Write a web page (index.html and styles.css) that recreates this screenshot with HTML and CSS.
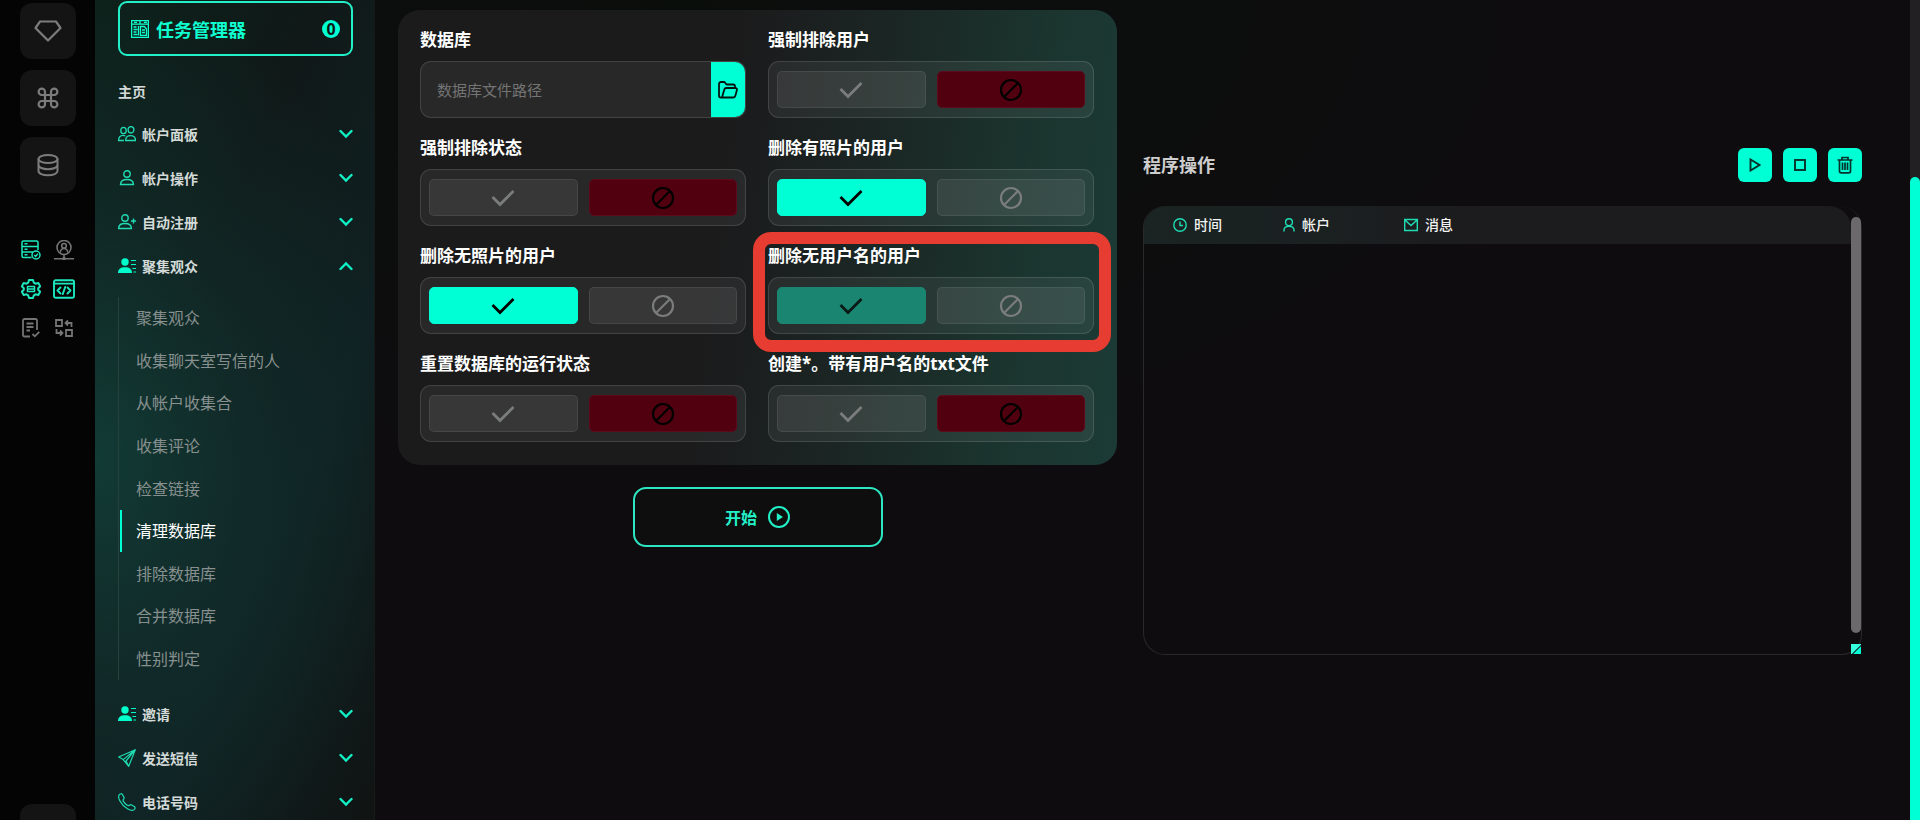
FILE: index.html
```html
<!DOCTYPE html>
<html lang="zh-CN">
<head>
  <meta charset="UTF-8" />
  <meta name="viewport" content="width=device-width, initial-scale=1" />
  <title>清理数据库</title>
  <link rel="stylesheet" href="styles.css">
</head>
<body>

  <!-- shared icons -->
  <svg class="sprite" aria-hidden="true">
    <symbol id="check" viewBox="0 0 24 18"><path d="M1.500 8 9 15.500 22.500 2" fill="none" stroke="currentColor" stroke-width="2.800"/></symbol>
    <symbol id="ban" viewBox="0 0 24 24"><circle cx="12" cy="12" r="10" fill="none" stroke="currentColor" stroke-width="2.200"/><path d="M5 19 19 5" stroke="currentColor" stroke-width="2.200"/></symbol>
    <symbol id="chevron" viewBox="0 0 14 10"><path d="M1.500 2 7 7.500 12.500 2" fill="none" stroke="currentColor" stroke-width="2.400" stroke-linecap="round"/></symbol>
    <symbol id="lines-user" viewBox="0 0 18 16"><circle cx="7" cy="4" r="3.700"/><path d="M0 15c0-4 2.500-5.800 7-5.800S14 11 14 15Z"/><path d="M13 2.500h5M13 6.500h5M14.500 10.500H18M15.500 14H18" stroke="currentColor" stroke-width="1"/></symbol>
  </svg>

  <div class="layout">
    <nav class="rail" aria-label="工具">
      <div class="rail-tiles">
        <a class="tile" href="#" aria-label="高级">
          <svg width="28" height="24" viewBox="0 0 28 24"><path d="M6 2.500h16l4.500 6.500L14 21.500 1.500 9Z" fill="none" stroke="currentColor" stroke-width="2.200" stroke-linejoin="round"/></svg>
        </a>
        <a class="tile" href="#" aria-label="命令">
          <svg width="22" height="22" viewBox="0 0 22 22"><path d="M8 8V4.800A3.200 3.200 0 1 0 4.800 8h12.400A3.200 3.200 0 1 0 14 4.800v12.400a3.200 3.200 0 1 0 3.200-3.200H4.800A3.200 3.200 0 1 0 8 17.200Z" fill="none" stroke="currentColor" stroke-width="2.200"/></svg>
        </a>
        <a class="tile" href="#" aria-label="数据库">
          <svg width="22" height="24" viewBox="0 0 22 24"><g fill="none" stroke="currentColor" stroke-width="2"><ellipse cx="11" cy="6" rx="9.500" ry="4"/><path d="M1.500 6v12c0 2.400 4 4.300 9.500 4.300s9.500-1.900 9.500-4.300V6M1.500 12c0 2.400 4 4.200 9.500 4.200s9.500-1.800 9.500-4.200"/></g></svg>
        </a>
      </div>

      <div class="rail-icons">
        <a class="on" href="#" aria-label="服务器">
          <svg width="20" height="20" viewBox="0 0 20 20"><g fill="none" stroke="currentColor" stroke-width="1.500"><path d="M10.500 17.500h-8A1.500 1.500 0 0 1 1 16V2.500A1.500 1.500 0 0 1 2.500 1h13A1.500 1.500 0 0 1 17 2.500V10M1 6.500h16M1 12h11"/><path d="M3.500 3.800h3M3.500 9.300h3M3.500 14.800h3"/><circle cx="15" cy="15" r="4"/><path d="m13.200 15 1.400 1.400 2.300-2.600"/></g></svg>
        </a>
        <a href="#" aria-label="代理">
          <svg width="20" height="20" viewBox="0 0 20 20"><g fill="none" stroke="currentColor" stroke-width="1.600"><circle cx="10" cy="7.500" r="7"/><circle cx="10" cy="5.800" r="2.300"/><path d="M6.300 12.500c.2-2.800 1.500-4 3.700-4s3.500 1.200 3.700 4M10 14.500v3M0 18.800h20"/><circle cx="10" cy="18.500" r="1"/></g></svg>
        </a>
        <a class="on" href="#" aria-label="设置">
          <svg width="20" height="20" viewBox="0 0 20 20"><g fill="none" stroke="currentColor" stroke-width="2" stroke-linejoin="round"><path d="M8 1h4l.8 2.700 1.700 1 2.800-.7 1.900 3.300-2 2v1.400l2 2-1.900 3.300-2.800-.7-1.700 1L12 19H8l-.8-2.700-1.700-1-2.800.7-1.900-3.300 2-2V9.300l-2-2L2.700 4l2.800.7 1.700-1Z"/><path d="M6.500 7.500h7v5h-7ZM6.500 10h7" stroke-width="1.500"/></g></svg>
        </a>
        <a class="on" href="#" aria-label="代码">
          <svg width="22" height="20" viewBox="0 0 22 20"><g fill="none" stroke="currentColor" stroke-width="1.900" stroke-linecap="round" stroke-linejoin="round"><rect x="1" y="1.200" width="20" height="17.600" rx="1.800"/><path d="M1 4.600h20M7.500 8.500 4.500 11.500l3 3M14.500 8.500l3 3-3 3M12.200 8l-2.400 7"/></g></svg>
        </a>
        <a href="#" aria-label="任务">
          <svg width="18" height="20" viewBox="0 0 18 20"><g fill="none" stroke="currentColor" stroke-width="1.800"><path d="M8 18.500H2.500A1.500 1.500 0 0 1 1 17V2.500A1.500 1.500 0 0 1 2.500 1h11A1.500 1.500 0 0 1 15 2.500V12M4.500 5.500h7M4.500 9h7M4.500 12.500H8M10.500 16l2.300 2.300 4.500-4.500"/></g></svg>
        </a>
        <a href="#" aria-label="转换">
          <svg width="18" height="18" viewBox="0 0 18 18"><g fill="none" stroke="currentColor" stroke-width="1.800"><path d="M1 1h6v6H1ZM11 11h6v6h-6ZM16.500 8V4H11M13 1.500 10.500 4 13 6.500M1.500 10v4H7M5 11.500 7.500 14 5 16.500"/></g></svg>
        </a>
      </div>

      <a class="tile tile-last" href="#" aria-label="更多"></a>
    </nav>

    <aside class="sidebar">
      <a class="manager" href="#">
        <svg width="18" height="18" viewBox="0 0 18 18"><g fill="none" stroke="currentColor" stroke-width="1.300"><path d="M.6.600h16.800v16.800H.6ZM.6 4.200h16.800M9 4.200v-3M3 2.400h3M13 2.400h3"/><path d="M2.500 7h3M2.500 9.500h4M2.500 12h3M2.500 14.500h4M7.500 6v9.500M9.500 6.500h3.800L15.500 9v6.300h-6ZM11 10h3M11 12.500h3"/></g></svg>
        <span>任务管理器</span>
        <span class="badge">0</span>
      </a>

      <nav class="menu" aria-label="主菜单">
        <a class="home" href="#">主页</a>
        <a class="row" href="#">
          <svg class="ico" viewBox="0 0 18 16"><g fill="none" stroke="currentColor" stroke-width="1.300"><ellipse cx="5.500" cy="4.500" rx="2.700" ry="3.200"/><ellipse cx="13" cy="3.800" rx="2.900" ry="3.200"/><path d="M6 14.500H.6C.6 11 2.200 9.300 5 9.300c1 0 1.700.2 2.300.5M7.600 14.500c0-3.500 1.900-4.900 5-4.900s4.900 1.400 4.900 4.900Z"/></g></svg>
          <span>帐户面板</span>
          <svg class="chev"><use href="#chevron"/></svg>
        </a>
        <a class="row" href="#">
          <svg class="ico" viewBox="0 0 18 16"><g fill="none" stroke="currentColor" stroke-width="1.400"><circle cx="9" cy="4" r="3.200"/><path d="M2.500 14.500c0-3.600 2.200-5 6.500-5s6.500 1.400 6.500 5Z"/></g></svg>
          <span>帐户操作</span>
          <svg class="chev"><use href="#chevron"/></svg>
        </a>
        <a class="row" href="#">
          <svg class="ico" viewBox="0 0 18 16"><g fill="none" stroke="currentColor" stroke-width="1.400"><circle cx="7" cy="4" r="3.200"/><path d="M.6 14.500c0-3.600 2.200-5 6.400-5s6.400 1.400 6.400 5ZM15.500 4.500v5M13 7h5"/></g></svg>
          <span>自动注册</span>
          <svg class="chev"><use href="#chevron"/></svg>
        </a>
        <a class="row" href="#" aria-expanded="true">
          <svg class="ico solid"><use href="#lines-user"/></svg>
          <span>聚集观众</span>
          <svg class="chev up"><use href="#chevron"/></svg>
        </a>
        <div class="submenu">
          <a href="#">聚集观众</a>
          <a href="#">收集聊天室写信的人</a>
          <a href="#">从帐户收集合</a>
          <a href="#">收集评论</a>
          <a href="#">检查链接</a>
          <a class="active" href="#" aria-current="page">清理数据库</a>
          <a href="#">排除数据库</a>
          <a href="#">合并数据库</a>
          <a href="#">性别判定</a>
        </div>
        <a class="row" href="#">
          <svg class="ico solid"><use href="#lines-user"/></svg>
          <span>邀请</span>
          <svg class="chev"><use href="#chevron"/></svg>
        </a>
        <a class="row" href="#">
          <svg class="ico tall" viewBox="0 0 18 18"><path d="M17.300.700.7 8l4.500 2.600L10.700 17.300ZM17.300.700 5.200 10.600M17.300.700 8 12l2.700 5.300" fill="none" stroke="currentColor" stroke-width="1.200" stroke-linejoin="round"/></svg>
          <span>发送短信</span>
          <svg class="chev"><use href="#chevron"/></svg>
        </a>
        <a class="row" href="#">
          <svg class="ico tall" viewBox="0 0 18 18"><path d="M1.200 1.800C2.400.400 3.600.400 4.400 1.600l1.500 2.500c.5.900.2 1.600-.5 2.300-.6.600-.6 1 0 2 .9 1.500 2.300 2.900 3.900 3.900 1 .6 1.400.5 2 0 .7-.7 1.400-.9 2.300-.4l2.600 1.600c1.300.8 1.200 2 0 3.100-1.500 1.300-3.700.9-6.700-.9-3.200-1.900-6-4.700-7.700-8C.5 5.200.200 3.100 1.200 1.800Z" fill="none" stroke="currentColor" stroke-width="1.200"/></svg>
          <span>电话号码</span>
          <svg class="chev"><use href="#chevron"/></svg>
        </a>
      </nav>
    </aside>

    <main class="content">
      <section class="left">
        <div class="card">
          <div class="field">
            <label class="title" for="db-path">数据库</label>
            <div class="box file">
              <input id="db-path" type="text" placeholder="数据库文件路径">
              <button class="browse" type="button" aria-label="选择文件">
                <svg width="20" height="18" viewBox="0 0 20 18"><path d="M4 16.500H2.800C1.700 16.500 1 15.800 1 14.700V3c0-1.200.8-2 2-2h3.500L8.500 3.500H15c1.300 0 2 .8 2 2V7M4 16.500 6.300 8.400C6.600 7.400 7.200 7 8.200 7h9.200c1.200 0 1.800.8 1.500 1.900l-1.600 6.200c-.3 1-.9 1.400-1.900 1.400Z" fill="none" stroke="currentColor" stroke-width="1.800" stroke-linejoin="round"/></svg>
              </button>
            </div>
          </div>

          <div class="field">
            <div class="title" id="f1">强制排除用户</div>
            <div class="box toggle" role="group" aria-labelledby="f1">
              <button type="button" aria-label="是"><svg class="check"><use href="#check"/></svg></button>
              <button class="no" type="button" aria-label="否" aria-pressed="true"><svg class="ban"><use href="#ban"/></svg></button>
            </div>
          </div>

          <div class="field">
            <div class="title" id="f2">强制排除状态</div>
            <div class="box toggle" role="group" aria-labelledby="f2">
              <button type="button" aria-label="是"><svg class="check"><use href="#check"/></svg></button>
              <button class="no" type="button" aria-label="否" aria-pressed="true"><svg class="ban"><use href="#ban"/></svg></button>
            </div>
          </div>

          <div class="field">
            <div class="title" id="f3">删除有照片的用户</div>
            <div class="box toggle" role="group" aria-labelledby="f3">
              <button class="yes" type="button" aria-label="是" aria-pressed="true"><svg class="check"><use href="#check"/></svg></button>
              <button type="button" aria-label="否"><svg class="ban"><use href="#ban"/></svg></button>
            </div>
          </div>

          <div class="field">
            <div class="title" id="f4">删除无照片的用户</div>
            <div class="box toggle" role="group" aria-labelledby="f4">
              <button class="yes" type="button" aria-label="是" aria-pressed="true"><svg class="check"><use href="#check"/></svg></button>
              <button type="button" aria-label="否"><svg class="ban"><use href="#ban"/></svg></button>
            </div>
          </div>

          <div class="field marked">
            <div class="title" id="f5">删除无用户名的用户</div>
            <div class="box toggle" role="group" aria-labelledby="f5">
              <button class="yes dim" type="button" aria-label="是" aria-pressed="true"><svg class="check"><use href="#check"/></svg></button>
              <button type="button" aria-label="否"><svg class="ban"><use href="#ban"/></svg></button>
            </div>
          </div>

          <div class="field">
            <div class="title" id="f6">重置数据库的运行状态</div>
            <div class="box toggle" role="group" aria-labelledby="f6">
              <button type="button" aria-label="是"><svg class="check"><use href="#check"/></svg></button>
              <button class="no" type="button" aria-label="否" aria-pressed="true"><svg class="ban"><use href="#ban"/></svg></button>
            </div>
          </div>

          <div class="field">
            <div class="title" id="f7">创建*。带有用户名的txt文件</div>
            <div class="box toggle" role="group" aria-labelledby="f7">
              <button type="button" aria-label="是"><svg class="check"><use href="#check"/></svg></button>
              <button class="no" type="button" aria-label="否" aria-pressed="true"><svg class="ban"><use href="#ban"/></svg></button>
            </div>
          </div>
        </div>

        <button class="start" type="button">
          开始
          <svg width="22" height="22" viewBox="0 0 22 22"><circle cx="11" cy="11" r="10" fill="none" stroke="currentColor" stroke-width="2"/><path d="M8.800 7 15 11l-6.200 4Z" fill="currentColor"/></svg>
        </button>
      </section>

      <section class="right">
        <div class="ops">
          <h2>程序操作</h2>
          <button type="button" aria-label="运行"><svg width="12" height="14" viewBox="0 0 12 14"><path d="M1.500 1.500v11L10.500 7Z" fill="none" stroke="currentColor" stroke-width="1.900"/></svg></button>
          <button type="button" aria-label="停止"><svg width="12" height="12" viewBox="0 0 12 12"><rect x="1" y="1" width="10" height="10" fill="none" stroke="currentColor" stroke-width="1.900"/></svg></button>
          <button type="button" aria-label="清空"><svg width="16" height="18" viewBox="0 0 16 18"><path d="M.5 4h15M5 4V1.500h6V4M2.500 4v11c0 1.200.7 1.800 1.800 1.800h7.400c1.100 0 1.800-.6 1.800-1.800V4M5.500 6.500v7.500M8 6.500v7.500M10.500 6.500v7.500" fill="none" stroke="currentColor" stroke-width="1.700"/></svg></button>
        </div>

        <div class="log">
          <table>
            <thead>
              <tr>
                <th class="time"><svg width="14" height="14" viewBox="0 0 14 14"><g fill="none" stroke="currentColor" stroke-width="1.400"><circle cx="7" cy="7" r="6.200"/><path d="M7 3.500V7.500h3"/></g></svg>时间</th>
                <th class="account"><svg width="12" height="14" viewBox="0 0 12 14"><g fill="none" stroke="currentColor" stroke-width="1.400"><circle cx="6" cy="4.200" r="3.400"/><path d="M1 13.500V12c0-2.600 1.800-3.600 5-3.600s5 1 5 3.600v1.500"/></g></svg>帐户</th>
                <th><svg width="14" height="14" viewBox="0 0 14 14"><path d="M.7 1.500h12.600v11H.7ZM.7 1.800 7 7.500l6.300-5.700" fill="none" stroke="currentColor" stroke-width="1.400"/></svg>消息</th>
              </tr>
            </thead>
          </table>
          <div class="log-scroll"><span class="thumb"></span><span class="grip"></span></div>
        </div>
      </section>
    </main>

    <div class="page-scroll"><span></span></div>
  </div>

</body>
</html>
```
FILE: styles.css
```css
* {
  box-sizing: border-box;
}

body {
  margin: 0;
  height: 100vh;
  overflow: hidden;
  background: #0e0c0f;
  color: #fff;
  font-family: "Noto Sans", "Noto Sans CJK SC", sans-serif;
  font-size: 14px;
}

a {
  color: inherit;
  text-decoration: none;
}

button {
  padding: 0;
  border: none;
  font-family: inherit;
  cursor: pointer;
}

svg {
  display: block;
  flex: none;
}

.sprite {
  display: none;
}

.layout {
  display: flex;
  height: 100vh;
}

/* left rail */
.rail {
  width: 95px;
  flex: none;
  display: flex;
  flex-direction: column;
  padding: 3px 19px 0 20px;
  background: #040405;
  overflow: hidden;
}

.rail-tiles {
  display: grid;
  gap: 11px;
}

.tile {
  width: 56px;
  height: 56px;
  display: flex;
  flex: none;
  align-items: center;
  justify-content: center;
  border-radius: 12px;
  background: #141414;
  color: #7c7c7c;
}

.tile-last {
  margin-top: auto;
  margin-bottom: -40px;
}

.rail-icons {
  display: grid;
  grid-template-columns: 22px 22px;
  grid-auto-rows: 20px;
  gap: 19px 11px;
  margin-top: 47px;
  color: #747474;
}

.rail-icons a {
  display: flex;
  align-items: center;
  justify-content: center;
}

.rail-icons .on {
  color: #1ce8be;
}

/* sidebar */
.sidebar {
  width: 280px;
  flex: none;
  padding: 1px 21px 0 23px;
  background:
    radial-gradient(ellipse 320px 480px at 0 56%, #123b35 0%, rgba(17, 48, 46, 0.6) 50%, rgba(17, 36, 36, 0) 100%),
    linear-gradient(115deg, #0d211a 0%, #101918 35%, #102022 65%, #101413 100%);
  border-right: 1px solid #161b1a;
  overflow: hidden;
}

.manager {
  height: 55px;
  display: flex;
  align-items: center;
  gap: 7px;
  padding: 0 11px;
  border: 2px solid #22f0c9;
  border-radius: 9px;
  color: #0fffd0;
  font-size: 18px;
  font-weight: 700;
}

.badge {
  width: 18px;
  height: 18px;
  margin-left: auto;
  border-radius: 50%;
  background: #00ffd2;
  color: #101413;
  font-size: 16px;
  line-height: 18px;
  text-align: center;
}

.menu {
  display: flex;
  flex-direction: column;
  margin-top: 16px;
  color: #d3dad8;
  font-weight: 700;
}

.home {
  height: 40px;
  line-height: 40px;
}

.row {
  height: 44px;
  display: flex;
  align-items: center;
  gap: 6px;
}

.ico {
  width: 18px;
  height: 16px;
  color: #1fdcb2;
}

.ico.tall {
  height: 18px;
}

.ico.solid {
  color: #00ffcc;
  fill: #00ffcc;
}

.chev {
  width: 14px;
  height: 10px;
  margin-left: auto;
  color: #12efc5;
}

.chev.up {
  transform: rotate(180deg);
}

.submenu {
  height: 383px;
  display: flex;
  flex-direction: column;
  margin: 9px 0 12px;
  border-left: 1px solid #26403c;
  color: #87908e;
  font-size: 16px;
  font-weight: 400;
  line-height: 22px;
}

.submenu a {
  flex: 1;
  display: flex;
  align-items: center;
  margin-left: 1px;
  padding-left: 14px;
  border-left: 2px solid transparent;
}

.submenu .active {
  border-left-color: #00ffd2;
  color: #fff;
}

/* page body */
.content {
  flex: 1;
  display: grid;
  grid-template-columns: 1fr 1fr;
  gap: 26px;
  padding: 10px 48px 0 23px;
  background: radial-gradient(ellipse 900px 500px at 20% 0, #0a0e0b 0%, #0d0d0e 70%, #0e0c0f 100%);
}

.card {
  display: grid;
  grid-template-columns: 1fr 1fr;
  gap: 18px 22px;
  padding: 18px 23px 23px 22px;
  border-radius: 22px;
  background: linear-gradient(97deg, #1b1b1b 0%, #1b1b1c 45%, #1b2523 62%, #1b342e 84%, #1c3b36 100%);
}

.field {
  position: relative;
}

.title {
  display: block;
  margin-bottom: 9px;
  font-size: 17px;
  font-weight: 700;
  line-height: 24px;
}

.box {
  height: 57px;
  display: flex;
  border: 1px solid rgba(255, 255, 255, 0.12);
  border-radius: 11px;
  background: rgba(255, 255, 255, 0.06);
}

.file input {
  flex: 1;
  min-width: 0;
  padding: 0 16px;
  border: none;
  background: none;
  color: #fff;
  font-family: inherit;
  font-size: 15px;
  outline: none;
}

.file input::placeholder {
  color: #747474;
}

.browse {
  width: 34px;
  display: flex;
  align-items: center;
  justify-content: center;
  border-radius: 0 10px 10px 0;
  background: #00ffd5;
  color: #02120f;
}

.toggle {
  gap: 11px;
  padding: 9px 8px;
}

.toggle button {
  flex: 1;
  display: flex;
  align-items: center;
  justify-content: center;
  border: 1px solid rgba(255, 255, 255, 0.08);
  border-radius: 5px;
  background: rgba(255, 255, 255, 0.07);
  color: #7a7d7c;
}

.check {
  width: 24px;
  height: 18px;
}

.ban {
  width: 24px;
  height: 24px;
}

.toggle .yes {
  border-color: #00ffd5;
  background: #00ffd5;
  color: #000;
}

.toggle .yes.dim {
  border-color: #1a8672;
  background: #1a8672;
  color: #0a1a17;
}

.toggle .no {
  border-color: #5c0a1c;
  background: #50000e;
  color: #000;
}

/* red frame over the field */
.marked::after {
  content: "";
  position: absolute;
  inset: -12px -17px -18px -15px;
  border: 12px solid #e63c31;
  border-radius: 18px;
  pointer-events: none;
}

.start {
  width: 250px;
  height: 60px;
  display: flex;
  align-items: center;
  justify-content: center;
  gap: 11px;
  margin: 22px auto 0;
  border: 2px solid #2de6c2;
  border-radius: 13px;
  background: #0e0e0e;
  color: #22f0c8;
  font-size: 16px;
  font-weight: 700;
}

/* log panel */
.right {
  padding-top: 138px;
}

.ops {
  display: flex;
  gap: 11px;
  align-items: center;
}

.ops h2 {
  margin: 0 auto 0 0;
  color: #cdcdcd;
  font-size: 18px;
  font-weight: 700;
  line-height: 34px;
}

.ops button {
  width: 34px;
  height: 34px;
  display: flex;
  align-items: center;
  justify-content: center;
  border-radius: 6px;
  background: #00ffd5;
  color: #06302a;
}

.log {
  height: 449px;
  display: flex;
  align-items: flex-start;
  margin-top: 24px;
  border: 1px solid #29282a;
  border-top: none;
  border-radius: 22px 22px 20px 22px;
}

.log table {
  flex: 1;
  height: 38px;
  border-collapse: collapse;
  border-radius: 22px 22px 0 0;
  background: linear-gradient(90deg, #1a2422 0%, #1b2021 25%, #1c1b1d 50%);
}

.log th {
  padding: 0;
  color: #f2f2f2;
  font-size: 14px;
  font-weight: 500;
  line-height: 20px;
  text-align: left;
  white-space: nowrap;
}

.log th svg {
  display: inline-block;
  margin-right: 7px;
  color: #1fdcb4;
  vertical-align: -2px;
}

.log .time {
  width: 139px;
  padding-left: 29px;
}

.log .account {
  width: 121px;
}

.log-scroll {
  width: 10px;
  align-self: stretch;
  display: flex;
  flex-direction: column;
  gap: 11px;
  padding-top: 11px;
}

.thumb {
  flex: 1;
  border-radius: 5px;
  background: #6b696c;
}

.grip {
  height: 10px;
  background: linear-gradient(135deg, #35ffdd 0%, #35ffdd 55%, #0b5f52 55%, #0b5f52 65%, #00ffd5 65%);
}

.page-scroll {
  width: 10px;
  flex: none;
  padding-top: 177px;
  background: #222023;
}

.page-scroll span {
  display: block;
  height: 100%;
  border-radius: 5px 5px 0 0;
  background: #00ffd5;
}
```
